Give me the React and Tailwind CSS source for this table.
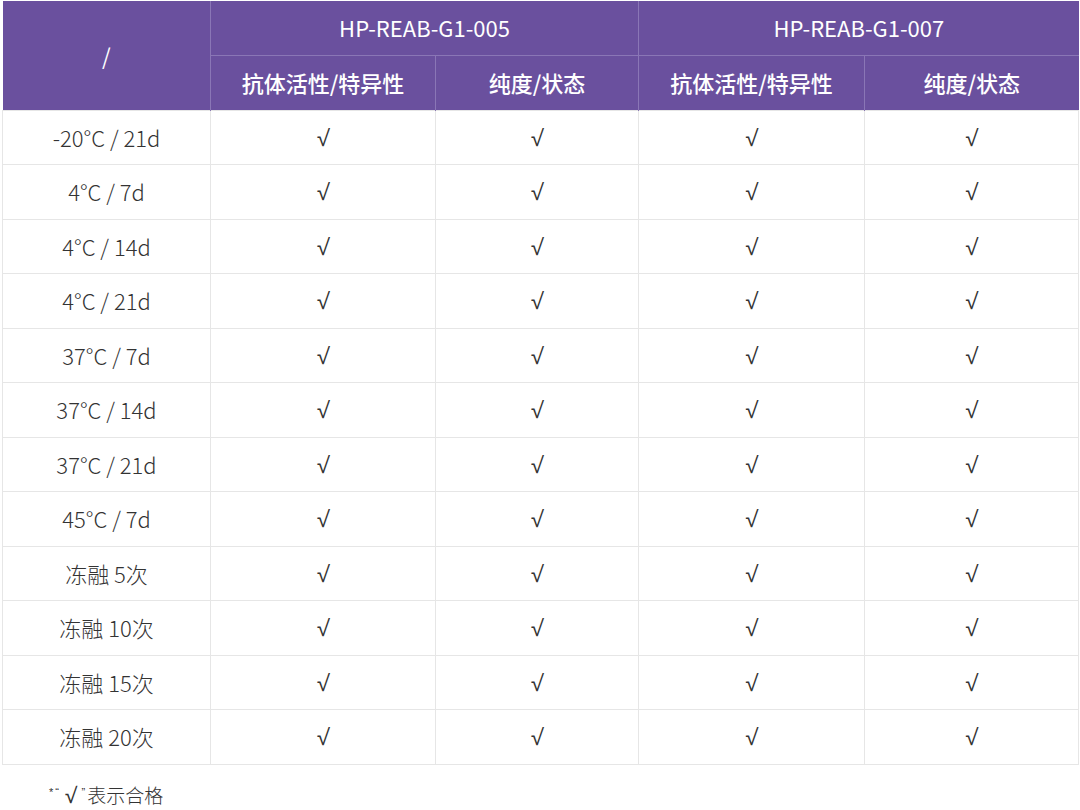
const rows = [
  "-20°C / 21d",
  "4°C / 7d",
  "4°C / 14d",
  "4°C / 21d",
  "37°C / 7d",
  "37°C / 14d",
  "37°C / 21d",
  "45°C / 7d",
  "冻融 5次",
  "冻融 10次",
  "冻融 15次",
  "冻融 20次",
];

const font = { fontFamily: '"Noto Sans CJK SC", "Noto Sans", sans-serif' };

export default function App() {
  return (
    <div className="bg-white w-[1080px] h-[810px] pt-px pl-[2px]" style={font}>
      <table className="border-collapse table-fixed w-[1076px] text-[22px]">
        <colgroup>
          <col className="w-[208px]" />
          <col className="w-[225px]" />
          <col className="w-[203px]" />
          <col className="w-[226px]" />
          <col className="w-[214px]" />
        </colgroup>
        <thead className="bg-[#6a509e] text-white">
          <tr className="h-[54px]">
            <th rowSpan={2} className="font-normal border-r border-[#8a76b6]">/</th>
            <th colSpan={2} className="font-normal border-r border-b border-[#8a76b6]">HP-REAB-G1-005</th>
            <th colSpan={2} className="font-normal border-b border-[#8a76b6]">HP-REAB-G1-007</th>
          </tr>
          <tr className="h-[55px]">
            <th className="font-medium border-r border-[#8a76b6]">抗体活性/特异性</th>
            <th className="font-medium border-r border-[#8a76b6]">纯度/状态</th>
            <th className="font-medium border-r border-[#8a76b6]">抗体活性/特异性</th>
            <th className="font-medium">纯度/状态</th>
          </tr>
        </thead>
        <tbody className="text-[#333]">
          {rows.map((r) => (
            <tr key={r} className="h-[54.5px]">
              <td className="text-center font-light border border-[#e6e6e6]">{r}</td>
              {[0, 1, 2, 3].map((i) => (
                <td key={i} className="text-center border border-[#e6e6e6] font-['Open_Sans']">√</td>
              ))}
            </tr>
          ))}
        </tbody>
      </table>
      <p className="mt-[16px] ml-[47px] text-[19px] text-[#333] font-light flex items-start">
        <span className="text-[11px] leading-none mt-[6px] tracking-[2px] font-['Liberation_Sans']">*“</span>
        <span className="font-['Open_Sans'] font-normal text-[21px] leading-[28px] ml-[4px] mr-[5px]">√</span>
        <span className="text-[11px] leading-none mt-[6px] mr-[2px] font-['Liberation_Sans']">”</span>
        <span className="leading-[28px]">表示合格</span>
      </p>
    </div>
  );
}
